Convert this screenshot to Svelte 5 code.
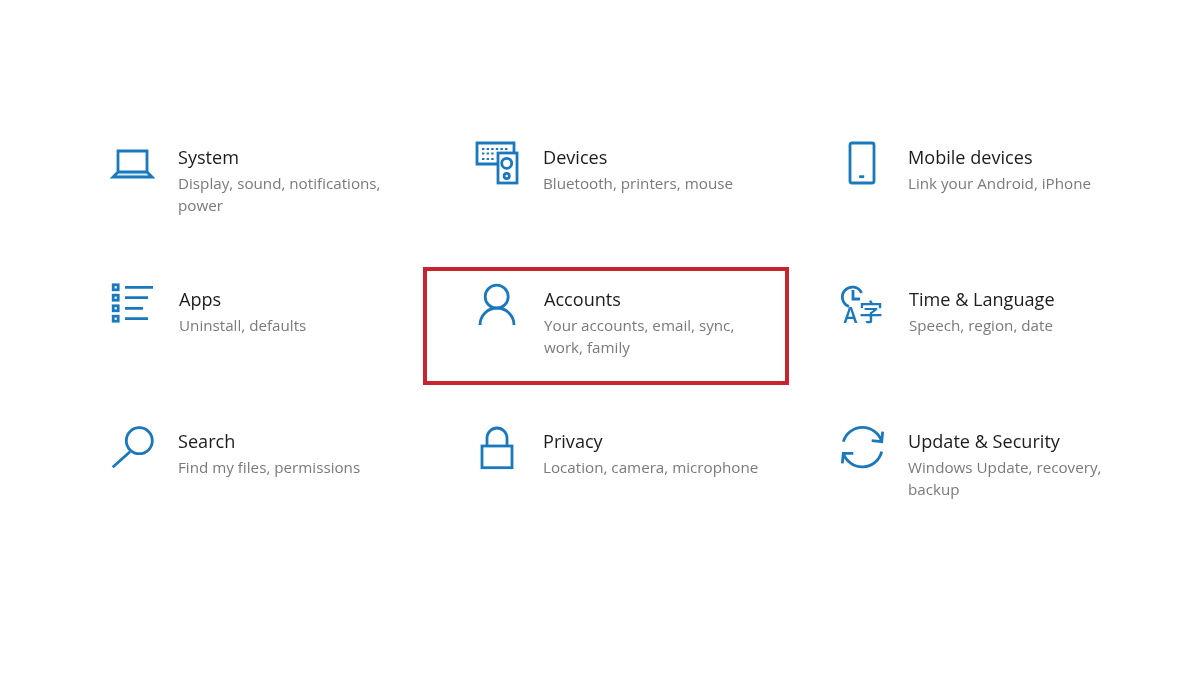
<script>
  const rows = [
    [
      { icon: "system", title: "System", desc: "Display, sound, notifications, power" },
      { icon: "devices", title: "Devices", desc: "Bluetooth, printers, mouse" },
      { icon: "mobile", title: "Mobile devices", desc: "Link your Android, iPhone" }
    ],
    [
      { icon: "apps", title: "Apps", desc: "Uninstall, defaults" },
      { icon: "accounts", title: "Accounts", desc: "Your accounts, email, sync, work, family", selected: true },
      { icon: "time", title: "Time & Language", desc: "Speech, region, date" }
    ],
    [
      { icon: "search", title: "Search", desc: "Find my files, permissions" },
      { icon: "privacy", title: "Privacy", desc: "Location, camera, microphone" },
      { icon: "update", title: "Update & Security", desc: "Windows Update, recovery, backup" }
    ]
  ];
</script>

{#snippet glyph(name)}
  <svg class="icon" viewBox="0 0 48 48" width="48" height="48" aria-hidden="true">
    {#if name === "system"}
      <path class="soft" d="M11 34l-5 5h39l-5-5z" />
      <path d="M11 34V13h29v21M11 34l-5 5h39l-5-5z" />
    {:else if name === "devices"}
      <path d="M26 26H5V5h37v10" />
      <rect x="26" y="15" width="19" height="30" />
      <circle cx="34.7" cy="25.3" r="5" />
      <circle cx="34.7" cy="38" r="2.6" />
      <path class="thin" stroke-dasharray="2.4 2.2" d="M10 11h27M10 15.5h13M10 21h12" />
    {:else if name === "mobile"}
      <rect x="13" y="5" width="24" height="40" rx="2" />
      <path d="M22.2 38.7h5" />
    {:else if name === "apps"}
      <rect x="5.2" y="4.8" width="5" height="5" />
      <rect x="5.2" y="15.2" width="5" height="5" />
      <rect x="5.2" y="25.8" width="5" height="5" />
      <rect x="5.2" y="36.2" width="5" height="5" />
      <path d="M17 7.3h28M17 17.7h23M17 28.3h18M17 38.7h23" />
    {:else if name === "accounts"}
      <circle cx="23.7" cy="16.7" r="11.5" />
      <path d="M7 45a17 17 0 0 1 34 0" />
    {:else if name === "time"}
      <path d="M11 26.5A10 10 0 1 1 23.5 13" />
      <path d="M15 10v9h7" />
      <text class="latin" x="5.5" y="43">A</text>
      <text class="cjk" x="21" y="41">字</text>
    {:else if name === "search"}
      <circle cx="32.3" cy="18.7" r="13" />
      <path d="M23 29.7L5.7 45.3" />
    {:else if name === "privacy"}
      <rect x="10" y="24" width="30" height="21.7" />
      <path d="M15 24v-8a10 10 0 0 1 20 0v8" />
    {:else if name === "update"}
      <path d="M6.3 19.7a20 20 0 0 1 38.4 0M45.7 9.7l-1 10-10-1" />
      <path d="M44.7 29.7a20 20 0 0 1-38.4 1.6M5.3 41.3l1-10h10" />
    {/if}
  </svg>
{/snippet}

<main class="page">
  {#each rows as row, i}
    <div class="row" class:shifted={i === 1}>
      {#each row as item}
        <div class="cell" class:selected={item.selected}>
          {@render glyph(item.icon)}
          <div class="text">
            <div class="title">{item.title}</div>
            <div class="desc">{item.desc}</div>
          </div>
        </div>
      {/each}
    </div>
  {/each}
</main>

<style>
  :global(body) {
    background: #fff;
  }

  .page {
    box-sizing: border-box;
    width: 1200px;
    height: 675px;
    padding: 125px 0 0 57px;
    display: flex;
    flex-direction: column;
    gap: 24px;
    background: #fff;
    font-family: "Open Sans", "Noto Sans", sans-serif;
    overflow: hidden;
    filter: blur(0.35px);
  }

  .row {
    display: flex;
    margin-left: 0;
  }

  .row.shifted {
    margin-left: 1px;
  }

  .cell {
    box-sizing: border-box;
    flex: 0 0 365px;
    height: 118px;
    display: flex;
    padding: 13px 0 0 50px;
    gap: 23px;
    position: relative;
  }

  .cell.selected::after {
    content: "";
    position: absolute;
    inset: 0 -1px 0 0;
    border: 4px solid #c8242f;
  }

  .icon {
    flex: none;
    fill: none;
    stroke: #1a78bd;
    stroke-width: 2.8;
  }

  .icon .thin {
    stroke-width: 2;
  }

  .icon .soft {
    fill: #d8eefb;
    stroke: none;
  }

  .icon text {
    fill: #1a78bd;
    stroke: none;
  }

  .icon .latin {
    font-family: "Open Sans", sans-serif;
    font-size: 21px;
    font-weight: 600;
  }

  .icon .cjk {
    font-family: "Noto Sans CJK SC", sans-serif;
    font-size: 24px;
    font-weight: 500;
  }

  .text {
    width: 222px;
    margin-top: 5px;
  }

  .title {
    font-size: 18.1px;
    line-height: 28px;
    color: #1c1c1c;
  }

  .desc {
    font-size: 15.2px;
    line-height: 22px;
    margin-top: 0.5px;
    color: #7a7a7a;
  }
</style>
